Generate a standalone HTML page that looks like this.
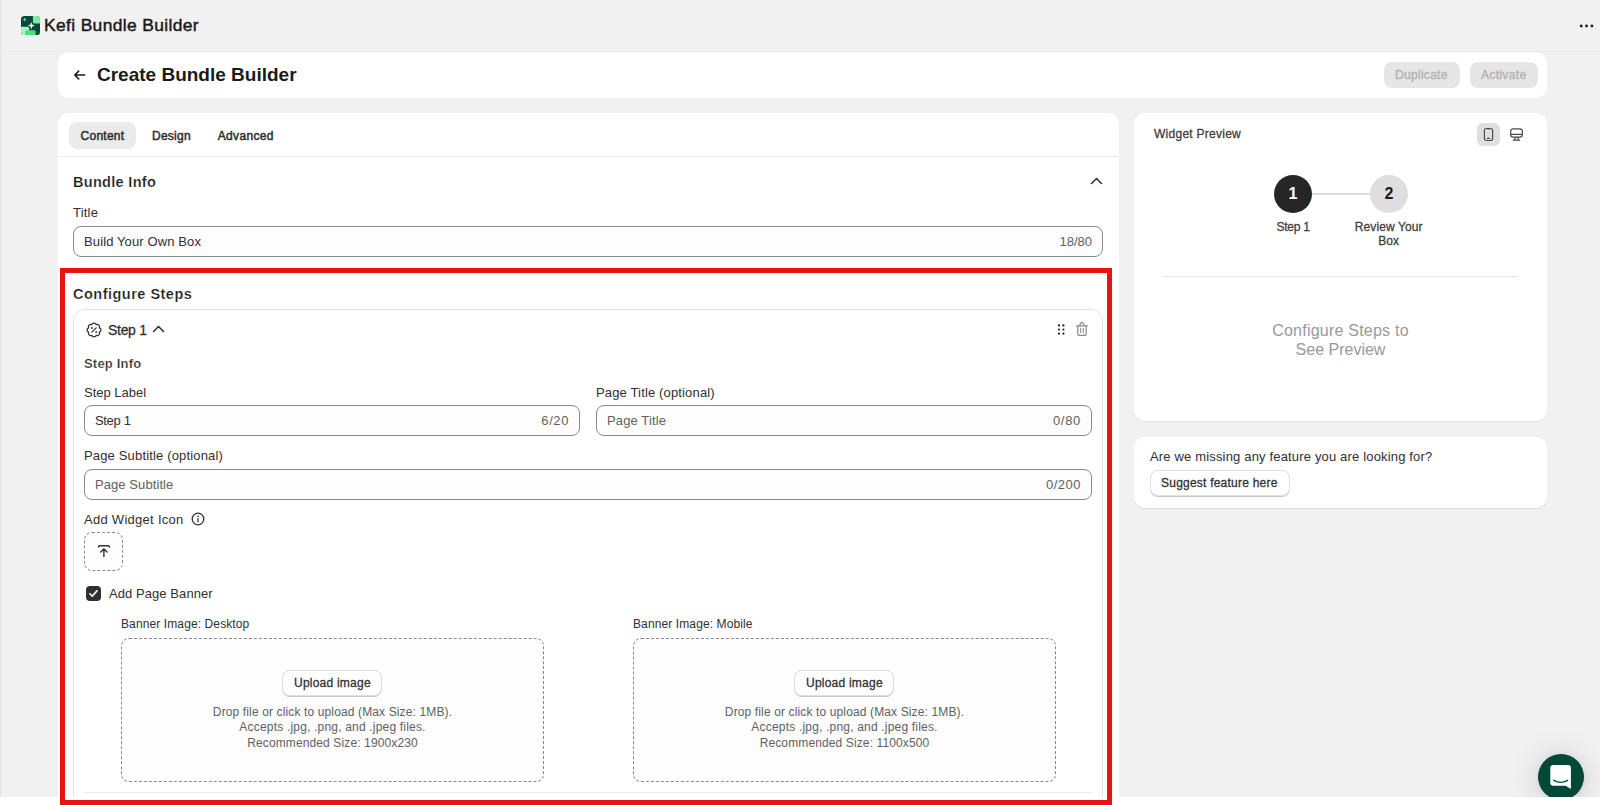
<!DOCTYPE html>
<html lang="en">
<head>
<meta charset="utf-8">
<title>Kefi Bundle Builder</title>
<style>
*{box-sizing:border-box;margin:0;padding:0}
html,body{width:1600px;height:805px;overflow:hidden;background:#fff}
body{font-family:"Liberation Sans",sans-serif;color:#303030;position:relative}
.a{position:absolute}
.t{position:absolute;white-space:nowrap;line-height:1;color:#303030}
#page{left:0;top:0;width:1600px;height:797px;background:#f1f1f1;overflow:hidden}
#strip{left:0;top:0;width:2px;height:797px;background:#e8e8e8}
#topline{left:2px;top:51px;width:1598px;height:1px;background:#ebebeb}
.card{background:#fff;border-radius:11px}
.inp{background:#fdfdfd;border:1px solid #8a8a8a;border-radius:8px}
.btn{background:#fff;border-radius:8px;box-shadow:0 0 0 1px #e0e0e0 inset,0 1px 0 0 #c8c8c8,0 -1px 0 0 #d9d9d9 inset}
.dz{border:1px dashed #8a8a8a;border-radius:8px;background:#fdfdfd}
.c{text-align:center}
.m{font-weight:400!important;-webkit-text-stroke:.28px currentColor}
.sb{font-weight:700;-webkit-text-stroke:.22px #fff}
</style>
</head>
<body>
<div id="page" class="a">
  <div id="strip" class="a"></div>
  <div id="topline" class="a"></div>

  <!-- top bar -->
  <svg class="a" style="left:21px;top:16px" width="19" height="19.4" viewBox="0 0 19 19.4">
    <defs><clipPath id="lg"><rect width="19" height="19.4" rx="3.6"/></clipPath></defs>
    <g clip-path="url(#lg)">
    <rect width="19" height="19.4" fill="#044a3b"/>
    <path d="M11.9 0H19V7.4H13.6A1.7 1.7 0 0 1 11.9 5.7Z" fill="#7eea9e"/>
    <path d="M0 10.7H6.5A1.7 1.7 0 0 1 8.2 12.4V19.4H0Z" fill="#a8f6bf"/>
    <path d="M4.1 19.4V15.8A1.6 1.6 0 0 1 5.7 14.2H13.1A1.6 1.6 0 0 1 14.7 15.8V19.4Z" fill="#52dc7d"/>
    <path d="M10.3 6.6L11 8.9L13.3 9.6L11 10.3L10.3 12.6L9.6 10.3L7.3 9.6L9.6 8.9Z" fill="#fff" stroke="#fff" stroke-width=".5" stroke-linejoin="round"/>
    <path d="M3.7 1.8L4.1 3.3L5.6 3.7L4.1 4.1L3.7 5.6L3.3 4.1L1.8 3.7L3.3 3.3Z" fill="#9fd8bf" stroke="#9fd8bf" stroke-width=".3"/>
    </g>
  </svg>
  <span id="t_app" class="m t" style="-webkit-text-stroke-width:.45px;left:44px;top:16.5px;font-size:17.4px;letter-spacing:.37px;color:#1a1a1a">Kefi Bundle Builder</span>
  <svg class="a" style="left:1579px;top:23.7px" width="15" height="4" viewBox="0 0 15 4"><circle cx="2.2" cy="2" r="1.4" fill="#1a1a1a"/><circle cx="7.5" cy="2" r="1.4" fill="#1a1a1a"/><circle cx="12.9" cy="2" r="1.4" fill="#1a1a1a"/></svg>

  <!-- header card -->
  <div class="a card" style="left:58px;top:52px;width:1489px;height:46px"></div>
  <svg class="a" style="left:73px;top:69px" width="13" height="12" viewBox="0 0 13 12"><path d="M5.7 2.1L1.8 6L5.7 9.9M2 6H11.7" fill="none" stroke="#1a1a1a" stroke-width="1.55" stroke-linecap="round" stroke-linejoin="round"/></svg>
  <span id="t_h1" class="t" style="left:97px;top:65.3px;font-size:19px;font-weight:700;color:#1a1a1a">Create Bundle Builder</span>
  <div class="a" style="left:1384px;top:62px;width:76px;height:26px;border-radius:8px;background:#e6e6e6"></div>
  <span id="t_dup" class="m t" style="-webkit-text-stroke-width:.45px;letter-spacing:.3px;left:1395px;top:68.5px;font-size:12px;font-weight:700;color:#b5b5b5">Duplicate</span>
  <div class="a" style="left:1470px;top:62px;width:68px;height:26px;border-radius:8px;background:#e6e6e6"></div>
  <span id="t_act" class="m t" style="-webkit-text-stroke-width:.45px;letter-spacing:.34px;left:1481px;top:68.5px;font-size:12px;font-weight:700;color:#b5b5b5">Activate</span>

  <!-- main left card -->
  <div class="a card" style="left:58px;top:113px;width:1061px;height:700px"></div>
  <div class="a" style="left:69px;top:122px;width:67px;height:27px;border-radius:8px;background:#ebebeb"></div>
  <span id="t_tab1" class="m t" style="-webkit-text-stroke-width:.5px;letter-spacing:.25px;left:80.6px;top:129.8px;font-size:12px;font-weight:700;color:#303030">Content</span>
  <span id="t_tab2" class="m t" style="-webkit-text-stroke-width:.5px;letter-spacing:.25px;left:152px;top:129.8px;font-size:12px;font-weight:700;color:#303030">Design</span>
  <span id="t_tab3" class="m t" style="-webkit-text-stroke-width:.5px;letter-spacing:.35px;left:217.7px;top:129.8px;font-size:12px;font-weight:700;color:#303030">Advanced</span>
  <div class="a" style="left:58px;top:156px;width:1061px;height:1px;background:#ebebeb"></div>

  <span id="t_bi" class="sb t" style="left:73px;top:174.5px;font-size:14.5px;letter-spacing:.31px;font-weight:700;color:#1a1a1a">Bundle Info</span>
  <svg class="a" style="left:1090px;top:177px" width="13" height="8" viewBox="0 0 13 8"><path d="M1.5 6.5L6.5 1.5L11.5 6.5" fill="none" stroke="#303030" stroke-width="1.5" stroke-linecap="round" stroke-linejoin="round"/></svg>
  <span id="t_title" class="t" style="letter-spacing:.2px;left:73px;top:206px;font-size:13px">Title</span>
  <div class="a inp" style="left:73px;top:226px;width:1030px;height:31px"></div>
  <span id="t_byob" class="t" style="letter-spacing:.12px;left:84px;top:235px;font-size:13px">Build Your Own Box</span>
  <span id="t_c1" class="t" style="right:508px;top:235px;font-size:13px;color:#616161">18/80</span>

  <!-- configure steps -->
  <span id="t_cs" class="sb t" style="left:73px;top:287px;font-size:14.5px;letter-spacing:.49px;font-weight:700;color:#1a1a1a">Configure Steps</span>
  <div class="a" style="left:73px;top:309px;width:1030px;height:520px;border:1px solid #e3e3e3;border-radius:12px"></div>

  <svg class="a" style="left:86px;top:321.5px" width="16" height="16" viewBox="0 0 16 16" fill="none" stroke="#303030" stroke-width="1.3" stroke-linecap="round" stroke-linejoin="round"><path d="M10.22 2.64A2.35 2.35 0 0 1 13.36 5.78A2.35 2.35 0 0 1 13.36 10.22A2.35 2.35 0 0 1 10.22 13.36A2.35 2.35 0 0 1 5.78 13.36A2.35 2.35 0 0 1 2.64 10.22A2.35 2.35 0 0 1 2.64 5.78A2.35 2.35 0 0 1 5.78 2.64A2.35 2.35 0 0 1 10.22 2.64Z"/><path d="M10.2 5.8L5.8 10.2" stroke-width="1.2"/><circle cx="5.9" cy="6" r=".55" fill="#303030" stroke-width=".7"/><circle cx="10.1" cy="10" r=".55" fill="#303030" stroke-width=".7"/></svg>
  <svg class="a" style="left:1057px;top:323px" width="9" height="13" viewBox="0 0 9 13" fill="#1a1a1a"><circle cx="2" cy="2.4" r="1.1"/><circle cx="6.4" cy="2.4" r="1.1"/><circle cx="2" cy="6.5" r="1.1"/><circle cx="6.4" cy="6.5" r="1.1"/><circle cx="2" cy="10.6" r="1.1"/><circle cx="6.4" cy="10.6" r="1.1"/></svg>
  <svg class="a" style="left:1075px;top:321px" width="14" height="16" viewBox="0 0 14 16" fill="none" stroke="#8a8a8a" stroke-width="1.2" stroke-linecap="round" stroke-linejoin="round"><path d="M1.6 4.8H12.4"/><path d="M4.9 4.6A2.1 3 0 0 1 9.1 4.6"/><path d="M2.8 5V12.4A2 2 0 0 0 4.8 14.4H9.2A2 2 0 0 0 11.2 12.4V5"/><path d="M5.7 7.4V11.6M8.3 7.4V11.6" stroke-width="1.1"/></svg>
  <span id="t_s1" class="m t" style="left:108px;top:322.5px;font-size:14px;letter-spacing:-.3px;color:#303030">Step 1</span>
  <svg class="a" style="left:152px;top:325px" width="13" height="8" viewBox="0 0 13 8"><path d="M1.5 6.5L6.5 1.5L11.5 6.5" fill="none" stroke="#303030" stroke-width="1.5" stroke-linecap="round" stroke-linejoin="round"/></svg>

  <span id="t_si" class="sb t" style="left:84px;top:356.5px;font-size:13px;letter-spacing:.2px;font-weight:700;color:#303030">Step Info</span>
  <span id="t_sl" class="t" style="left:84px;top:386px;font-size:13px">Step Label</span>
  <div class="a inp" style="left:84px;top:405px;width:496px;height:31px"></div>
  <span id="t_s1v" class="t" style="letter-spacing:-.33px;margin-top:-1px;left:95px;top:415px;font-size:13px">Step 1</span>
  <span id="t_c2" class="t" style="margin-top:-1px;letter-spacing:.6px;right:1031px;top:415px;font-size:13px;color:#616161">6/20</span>
  <span id="t_pt" class="t" style="letter-spacing:.15px;left:596px;top:386px;font-size:13px">Page Title (optional)</span>
  <div class="a inp" style="left:596px;top:405px;width:496px;height:31px"></div>
  <span id="t_ptp" class="t" style="letter-spacing:.12px;margin-top:-1px;left:607px;top:415px;font-size:13px;color:#616161">Page Title</span>
  <span id="t_c3" class="t" style="margin-top:-1px;letter-spacing:.7px;right:519px;top:415px;font-size:13px;color:#616161">0/80</span>

  <span id="t_ps" class="t" style="letter-spacing:0.16px;left:84px;top:449px;font-size:13px">Page Subtitle (optional)</span>
  <div class="a inp" style="left:84px;top:469px;width:1008px;height:31px"></div>
  <span id="t_psp" class="t" style="letter-spacing:.08px;left:95px;top:478px;font-size:13px;color:#616161">Page Subtitle</span>
  <span id="t_c4" class="t" style="letter-spacing:.5px;right:519px;top:478px;font-size:13px;color:#616161">0/200</span>

  <span id="t_awi" class="t" style="letter-spacing:0.28px;left:84px;top:512.5px;font-size:13px">Add Widget Icon</span>
  <svg class="a" style="left:190.5px;top:512px" width="14" height="14" viewBox="0 0 14 14" fill="none" stroke="#303030" stroke-width="1.3" stroke-linecap="round"><circle cx="7" cy="7" r="5.8"/><path d="M7 6.6V9.8"/><circle cx="7" cy="4.3" r=".5" fill="#303030" stroke-width=".6"/></svg>
  <div class="a" style="left:84px;top:532px;width:39px;height:39px;border:1px dashed #8a8a8a;border-radius:8px;background:#fdfdfd"></div>

  <svg class="a" style="left:96px;top:544px" width="16" height="15" viewBox="0 0 16 15" fill="none" stroke="#303030" stroke-width="1.4" stroke-linecap="round" stroke-linejoin="round"><path d="M2.5 3.1Q2.5 1.7 3.9 1.7H12.1Q13.5 1.7 13.5 3.1"/><path d="M7.9 12.6V5.2M4.7 8.1L7.9 4.9L11.1 8.1"/></svg>
  <div class="a" style="left:86px;top:586px;width:15px;height:15px;border-radius:4px;background:#303030"></div>
  <svg class="a" style="left:86px;top:586px" width="15" height="15" viewBox="0 0 15 15" fill="none" stroke="#fff" stroke-width="1.6" stroke-linecap="round" stroke-linejoin="round"><path d="M3.9 7.8L6.2 10.2L10.9 4.9"/></svg>
  <span id="t_apb" class="t" style="letter-spacing:0.07px;left:109px;top:587px;font-size:13px">Add Page Banner</span>

  <span id="t_bd" class="t" style="letter-spacing:0.11px;left:121px;top:618px;font-size:12px">Banner Image: Desktop</span>
  <div class="a dz" style="left:121px;top:638px;width:423px;height:144px"></div>
  <div class="a btn" style="left:282px;top:670px;width:100px;height:26px"></div>
  <span id="t_u1" class="m t" style="letter-spacing:0.23px;left:294px;top:677px;font-size:12px;font-weight:700;color:#303030">Upload image</span>
  <span id="t_d1a" class="t c" style="letter-spacing:0.13px;left:332.5px;transform:translateX(-50%);top:706px;font-size:12px;color:#616161">Drop file or click to upload (Max Size: 1MB).</span>
  <span id="t_d1b" class="t c" style="letter-spacing:0.19px;left:332.5px;transform:translateX(-50%);top:721px;font-size:12px;color:#616161">Accepts .jpg, .png, and .jpeg files.</span>
  <span id="t_d1c" class="t c" style="letter-spacing:0.12px;left:332.5px;transform:translateX(-50%);top:736.6px;font-size:12px;color:#616161">Recommended Size: 1900x230</span>

  <span id="t_bm" class="t" style="letter-spacing:0.11px;left:633px;top:618px;font-size:12px">Banner Image: Mobile</span>
  <div class="a dz" style="left:633px;top:638px;width:423px;height:144px"></div>
  <div class="a btn" style="left:794px;top:670px;width:100px;height:26px"></div>
  <span id="t_u2" class="m t" style="letter-spacing:0.23px;left:806px;top:677px;font-size:12px;font-weight:700;color:#303030">Upload image</span>
  <span id="t_d2a" class="t c" style="letter-spacing:0.13px;left:844.5px;transform:translateX(-50%);top:706px;font-size:12px;color:#616161">Drop file or click to upload (Max Size: 1MB).</span>
  <span id="t_d2b" class="t c" style="letter-spacing:0.19px;left:844.5px;transform:translateX(-50%);top:721px;font-size:12px;color:#616161">Accepts .jpg, .png, and .jpeg files.</span>
  <span id="t_d2c" class="t c" style="letter-spacing:0.12px;left:844.5px;transform:translateX(-50%);top:736.6px;font-size:12px;color:#616161">Recommended Size: 1100x500</span>
  <div class="a" style="left:84px;top:792px;width:1009px;height:1px;background:#ebebeb"></div>

  <!-- right column -->
  <div class="a card" style="left:1134px;top:113px;width:413px;height:308px;box-shadow:0 1px 0 0 #e3e3e3"></div>
  <span id="t_wp" class="m t" style="letter-spacing:.26px;left:1154px;top:128px;font-size:12px;font-weight:700;color:#3d3d3d">Widget Preview</span>
  <div class="a" style="left:1477px;top:123px;width:23px;height:23px;border-radius:6px;background:#dfdfdf"></div>

  <svg class="a" style="left:1483px;top:127px" width="11" height="15" viewBox="0 0 11 15" fill="none" stroke="#4a4a4a" stroke-width="1.2" stroke-linecap="round" stroke-linejoin="round"><rect x="1.4" y="1.5" width="8.2" height="12" rx="2"/><path d="M4.4 11.3H6.6"/><path d="M3.9 1.7Q5.5 2.7 7.1 1.7" stroke-width="1"/></svg>
  <svg class="a" style="left:1509px;top:127px" width="15" height="15" viewBox="0 0 15 15" fill="none" stroke="#4a4a4a" stroke-width="1.2" stroke-linecap="round" stroke-linejoin="round"><rect x="1.7" y="1.8" width="11.6" height="8.4" rx="2.4"/><path d="M1.9 7.4H13.1"/><path d="M6.3 10.4L5.6 12.9M8.7 10.4L9.4 12.9M4.3 13.1H10.7"/></svg>
  <div class="a" style="left:1311px;top:193px;width:60px;height:1.5px;background:#d9d9d9"></div>
  <div class="a" style="left:1274px;top:175px;width:38px;height:38px;border-radius:50%;background:#262626"></div>
  <span id="t_n1" class="t c" style="left:1293px;transform:translateX(-50%);top:186px;font-size:16px;font-weight:700;color:#fff">1</span>
  <div class="a" style="left:1370px;top:175px;width:38px;height:38px;border-radius:50%;background:#dedede"></div>
  <span id="t_n2" class="t c" style="left:1389px;transform:translateX(-50%);top:186px;font-size:16px;font-weight:700;color:#1a1a1a">2</span>
  <span id="t_st1" class="m t c" style="letter-spacing:-.27px;left:1293px;transform:translateX(-50%);top:220.5px;font-size:12px;font-weight:700;color:#3d3d3d">Step 1</span>
  <span id="t_rv1" class="m t c" style="letter-spacing:.11px;left:1388.7px;transform:translateX(-50%);top:220.5px;font-size:12px;font-weight:700;color:#3d3d3d">Review Your</span>
  <span id="t_rv2" class="m t c" style="left:1388.7px;transform:translateX(-50%);top:235px;font-size:12px;font-weight:700;color:#3d3d3d">Box</span>
  <div class="a" style="left:1164px;top:276px;width:354px;height:1px;background:#e3e3e3"></div>
  <span id="t_cf1" class="t c" style="letter-spacing:.23px;left:1340.5px;transform:translateX(-50%);top:323px;font-size:16px;color:#999">Configure Steps to</span>
  <span id="t_cf2" class="t c" style="left:1340.5px;transform:translateX(-50%);top:342px;font-size:16px;color:#999">See Preview</span>

  <div class="a card" style="left:1134px;top:437px;width:413px;height:71px;box-shadow:0 1px 0 0 #dcdcdc"></div>
  <span id="t_q" class="t" style="letter-spacing:.166px;left:1150px;top:450px;font-size:13px">Are we missing any feature you are looking for?</span>
  <div class="a btn" style="left:1150px;top:470px;width:140px;height:26px"></div>
  <span id="t_sf" class="m t" style="letter-spacing:.225px;left:1161px;top:477px;font-size:12px;font-weight:700;color:#303030">Suggest feature here</span>

  <!-- chat bubble -->
  <div class="a" style="left:1538px;top:754px;width:46px;height:46px;border-radius:50%;background:#004838;box-shadow:0 1px 6px rgba(0,0,0,.06),0 2px 32px rgba(0,0,0,.16)"></div>
  <svg class="a" style="left:1538px;top:754px" width="46" height="46" viewBox="0 0 46 46"><path d="M15.3 11H29.9A3 3 0 0 1 32.9 14V34.9L27.6 31.8H15.3A3 3 0 0 1 12.3 28.8V14A3 3 0 0 1 15.3 11Z" fill="#fff"/><path d="M15.8 26.3Q22.7 30.4 29.6 26.3" fill="none" stroke="#004838" stroke-width="1.4" stroke-linecap="round"/></svg>
</div>

<!-- red highlight -->
<div class="a" style="left:60px;top:268px;width:1052px;height:537px;border:5px solid #e51313"></div>
</body>
</html>
